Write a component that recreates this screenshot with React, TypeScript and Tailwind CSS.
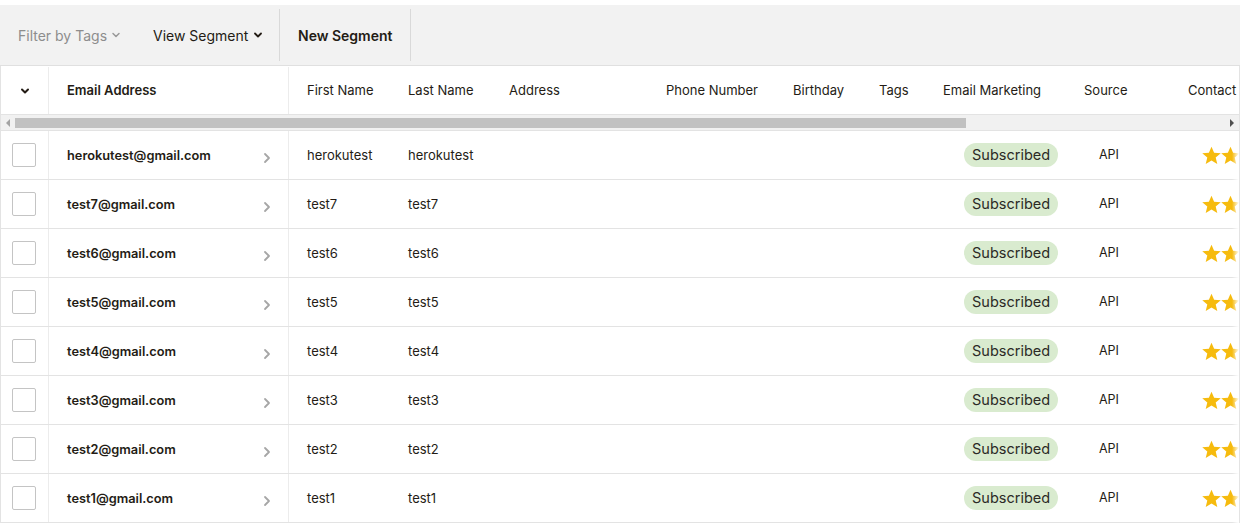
import React from "react";

const rows = [
  { email: "herokutest@gmail.com", first: "herokutest", last: "herokutest" },
  { email: "test7@gmail.com", first: "test7", last: "test7" },
  { email: "test6@gmail.com", first: "test6", last: "test6" },
  { email: "test5@gmail.com", first: "test5", last: "test5" },
  { email: "test4@gmail.com", first: "test4", last: "test4" },
  { email: "test3@gmail.com", first: "test3", last: "test3" },
  { email: "test2@gmail.com", first: "test2", last: "test2" },
  { email: "test1@gmail.com", first: "test1", last: "test1" },
];

const Star = () => (
  <svg width="19" height="19" viewBox="0 0 24 24" className="shrink-0">
    <path
      d="M12 .8l3.3 7.7 8.4.7-6.4 5.4 2 8.2L12 18.4l-7.3 4.4 2-8.2L.3 9.2l8.4-.7z"
      fill="#f6bb0e"
    />
  </svg>
);

const SmallChevronDown = ({ color, sw }: { color: string; sw: number }) => (
  <svg width="10" height="10" viewBox="0 0 10 10">
    <path d="M2 3.5l3 3 3-3" stroke={color} strokeWidth={sw} fill="none" strokeLinecap="round" strokeLinejoin="round" />
  </svg>
);

export default function App() {
  return (
    <div
      className="w-[1243px] h-[524px] bg-white overflow-hidden pt-[5px] text-[#241c15]"
      style={{ fontFamily: "Inter, 'Noto Sans', sans-serif" }}
    >
      <div className="w-[1240px]">
        {/* Toolbar */}
        <div className="h-[61px] bg-[#f2f2f2] flex items-stretch border-b border-[#e0e0e0]">
          <div className="w-[153px] shrink-0 flex items-center pl-[18px] text-[14px] text-[#8d8d8d] gap-[4px]">
            Filter by Tags
            <SmallChevronDown color="#9a9a9a" sw={1.5} />
          </div>
          <div className="w-[126px] shrink-0 flex items-center text-[14px] text-[#241c15] gap-[5px]">
            View Segment
            <SmallChevronDown color="#241c15" sw={1.8} />
          </div>
          <div className="my-[4px] w-px bg-[#d9d9d9]" />
          <div className="w-[130px] shrink-0 flex items-center pl-[18px] text-[14px] font-semibold pt-[1px]">New Segment</div>
          <div className="my-[4px] w-px bg-[#d9d9d9]" />
        </div>

        {/* Table */}
        <div className="relative border-l border-r border-[#e3e3e3] overflow-hidden">
          {/* Header */}
          <div className="h-[49px] flex items-center text-[13px] border-b border-[#e3e3e3] whitespace-nowrap pt-[1px]">
            <div className="w-[48px] h-full shrink-0 border-r border-[#ececec] flex items-center justify-center pl-[1px]">
              <SmallChevronDown color="#241c15" sw={2} />
            </div>
            <div className="w-[240px] h-full shrink-0 border-r border-[#ececec] flex items-center pl-[18px] font-semibold">
              Email Address
            </div>
            <div className="w-[101px] shrink-0 pl-[18px]">First Name</div>
            <div className="w-[101px] shrink-0 pl-[18px]">Last Name</div>
            <div className="w-[157px] shrink-0 pl-[18px]">Address</div>
            <div className="w-[127px] shrink-0 pl-[18px]">Phone Number</div>
            <div className="w-[86px] shrink-0 pl-[18px]">Birthday</div>
            <div className="w-[64px] shrink-0 pl-[18px]">Tags</div>
            <div className="w-[141px] shrink-0 pl-[18px]">Email Marketing</div>
            <div className="w-[104px] shrink-0 pl-[18px]">Source</div>
            <div className="shrink-0 pl-[18px]">Contact</div>
          </div>

          {/* Scrollbar */}
          <div className="h-[16px] bg-[#f1f1f1] border-b border-[#e3e3e3] flex items-center">
            <div className="w-[14px] h-full flex items-center justify-center">
              <div className="w-0 h-0 border-y-[4px] border-y-transparent border-r-[4px] border-r-[#a3a3a3]" />
            </div>
            <div className="w-[951px] h-[10px] bg-[#c1c1c1]" />
            <div className="flex-1" />
            <div className="w-[14px] h-full flex items-center justify-center">
              <div className="w-0 h-0 border-y-[4px] border-y-transparent border-l-[4px] border-l-[#505050]" />
            </div>
          </div>

          {/* Rows */}
          {rows.map((r) => (
            <div key={r.email} className="h-[49px] flex items-center text-[13px] border-b border-[#e3e3e3] whitespace-nowrap">
              <div className="w-[48px] h-full shrink-0 border-r border-[#ececec] flex items-center pl-[11px]">
                <div className="w-[24px] h-[24px] border border-[#c4c4c4] rounded-[2px] bg-white" />
              </div>
              <div className="w-[240px] h-full shrink-0 border-r border-[#ececec] flex items-center pl-[18px] pr-[17px] justify-between pt-[1px]">
                <span className="font-semibold text-[12.8px]">{r.email}</span>
                <svg width="8" height="12" viewBox="0 0 8 12" className="mt-[5px]">
                  <path d="M2 2l4 4-4 4" stroke="#a6a6a6" strokeWidth="1.8" fill="none" strokeLinecap="round" strokeLinejoin="round" />
                </svg>
              </div>
              <div className="w-[101px] shrink-0 pl-[18px] pt-[1px]">{r.first}</div>
              <div className="w-[101px] shrink-0 pl-[18px] pt-[1px]">{r.last}</div>
              <div className="w-[157px] shrink-0" />
              <div className="w-[127px] shrink-0" />
              <div className="w-[86px] shrink-0" />
              <div className="w-[64px] shrink-0" />
              <div className="w-[141px] shrink-0 pl-[39px]">
                <span className="inline-flex items-center h-[24px] px-[8px] rounded-full bg-[#d9ebcf] text-[14.5px] text-[#2b2a26]">
                  Subscribed
                </span>
              </div>
              <div className="w-[104px] shrink-0 pl-[33px] text-[12.5px] pt-[1px]">API</div>
              <div className="shrink-0 pl-[32px] flex pt-[1px]">
                <Star />
                <Star />
                <Star />
              </div>
            </div>
          ))}

          {/* right fade */}
          <div className="absolute right-0 top-[66px] bottom-0 w-[7px] bg-gradient-to-r from-transparent to-white pointer-events-none" />
        </div>
      </div>
    </div>
  );
}
